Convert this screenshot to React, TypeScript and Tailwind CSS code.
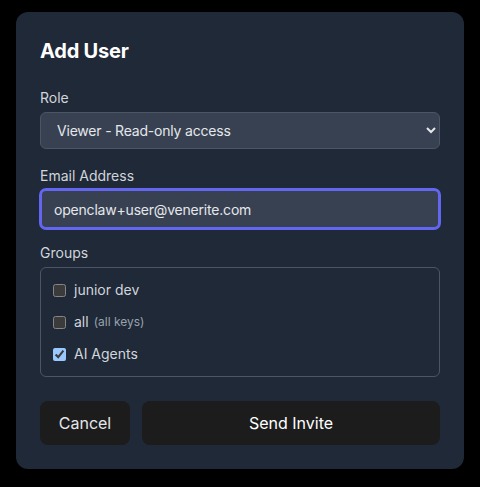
import React, { useState } from 'react';

const groups = [
  { id: 'junior', label: 'junior dev', note: '', checked: false },
  { id: 'all', label: 'all', note: '(all keys)', checked: false },
  { id: 'agents', label: 'AI Agents', note: '', checked: true },
];

export default function App() {
  const [role, setRole] = useState('viewer');
  const [email, setEmail] = useState('openclaw+user@venerite.com');
  const [selected, setSelected] = useState<Record<string, boolean>>(() =>
    Object.fromEntries(groups.map((g) => [g.id, g.checked]))
  );

  return (
    <div className="min-h-screen w-full bg-black pt-3 px-4 font-['Inter',sans-serif] [color-scheme:dark]">
      <div className="w-[448px] bg-[#1f2937] rounded-xl p-6">
        <h2 className="text-xl font-bold text-white tracking-[-0.2px] mt-px mb-[23px]">Add User</h2>

        {/* Role */}
        <label className="block text-sm text-gray-300 mb-1">Role</label>
        <select
          value={role}
          onChange={(e) => setRole(e.target.value)}
          className="w-full h-[37px] bg-[#374151] border border-[#4b5563] rounded-md px-3 text-sm tracking-[-0.2px] text-gray-200 mb-[17px] outline-none"
        >
          <option value="viewer">Viewer - Read-only access</option>
          <option value="editor">Editor - Read and write access</option>
          <option value="admin">Admin - Full access</option>
        </select>

        {/* Email */}
        <label className="block text-sm text-gray-300 mb-[3px]">Email Address</label>
        <input
          autoFocus
          type="email"
          value={email}
          onChange={(e) => setEmail(e.target.value)}
          className="w-full h-10 bg-[#374151] border-2 border-[#6366f1] rounded-md px-3 text-sm tracking-[-0.2px] text-gray-200 mb-[14px] outline-none shadow-[0_0_0_1px_#6366f1]"
        />

        {/* Groups */}
        <label className="block text-sm text-gray-300 mb-1">Groups</label>
        <div className="border border-[#4b5563] rounded-md p-3 flex flex-col gap-3">
          {groups.map((g) => (
            <label key={g.id} className="flex items-center h-5 text-sm text-gray-300 cursor-pointer">
              <input
                type="checkbox"
                checked={selected[g.id]}
                onChange={() => setSelected((prev) => ({ ...prev, [g.id]: !prev[g.id] }))}
                className="w-[13px] h-[13px] mr-2"
              />
              <span>{g.label}</span>
              {g.note && <span className="ml-[5px] text-xs text-gray-400">{g.note}</span>}
            </label>
          ))}
        </div>

        <div className="flex gap-3 mt-6">
          <button className="h-11 w-[90px] rounded-lg bg-[#1c1c1c] text-gray-200 text-base">Cancel</button>
          <button className="h-11 flex-1 rounded-lg bg-[#1c1c1c] text-white text-base">Send Invite</button>
        </div>
      </div>
    </div>
  );
}
